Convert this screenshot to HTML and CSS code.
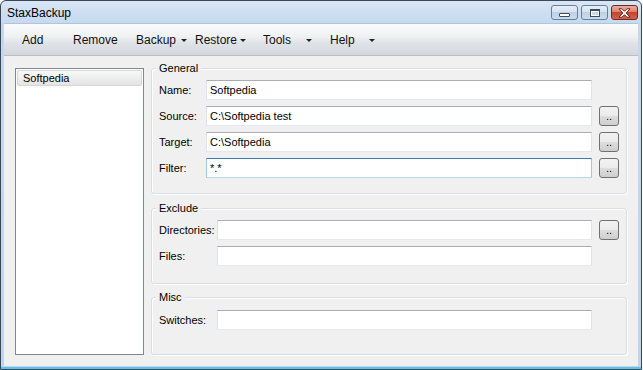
FILE: index.html
```html
<!DOCTYPE html>
<html lang="en">
<head>
    <meta charset="UTF-8">
    <title>StaxBackup</title>
    <link rel="stylesheet" href="styles.css">
</head>
<body>
    <div class="window">
        <!-- Title bar -->
        <div class="titlebar">
            <span class="title">StaxBackup</span>
            <div class="caption-buttons">
                <span class="cap"><span class="glyph-min"></span></span>
                <span class="cap"><span class="glyph-max"></span></span>
                <span class="cap close">
                    <svg width="13" height="10" viewBox="0 0 13 10"><path d="M1 0.8h3l2.5 2.5L9 0.8h3L8.2 5 12 9.2H9L6.5 6.7 4 9.2H1L4.8 5z" fill="#fff" stroke="#5a1c12" stroke-width="0.9" stroke-linejoin="round"/></svg>
                </span>
            </div>
        </div>

        <div class="client">
            <!-- Menu -->
            <div class="menubar">
                <span class="menu-item m-add">Add</span>
                <span class="menu-item m-remove">Remove</span>
                <span class="menu-item m-backup"><span class="menu-text">Backup</span><span class="arrow"></span></span>
                <span class="menu-item m-restore"><span class="menu-text">Restore</span><span class="arrow"></span></span>
                <span class="menu-item m-tools"><span class="menu-text">Tools</span><span class="arrow"></span></span>
                <span class="menu-item m-help"><span class="menu-text">Help</span><span class="arrow"></span></span>
            </div>

            <div class="body">
                <!-- Job list -->
                <div class="list">
                    <div class="list-item">Softpedia</div>
                </div>

                <!-- Settings -->
                <div class="groups">
                    <div class="group general">
                        <div class="group-title">General</div>
                        <div class="fields">
                            <span class="label">Name:</span>
                            <div class="textbox">Softpedia</div>
                            <span></span>

                            <span class="label">Source:</span>
                            <div class="textbox">C:\Softpedia test</div>
                            <button class="browse">..</button>

                            <span class="label">Target:</span>
                            <div class="textbox">C:\Softpedia</div>
                            <button class="browse">..</button>

                            <span class="label">Filter:</span>
                            <div class="textbox focused">*.*</div>
                            <button class="browse">..</button>
                        </div>
                    </div>

                    <div class="group exclude">
                        <div class="group-title">Exclude</div>
                        <div class="fields">
                            <span class="label">Directories:</span>
                            <div class="textbox"></div>
                            <button class="browse">..</button>

                            <span class="label">Files:</span>
                            <div class="textbox"></div>
                            <span></span>
                        </div>
                    </div>

                    <div class="group misc">
                        <div class="group-title">Misc</div>
                        <div class="fields">
                            <span class="label">Switches:</span>
                            <div class="textbox"></div>
                            <span></span>
                        </div>
                    </div>
                </div>
            </div>
        </div>
    </div>
</body>
</html>
```

FILE: styles.css
```css
/* Global */
* {
    box-sizing: border-box;
}

body {
    margin: 0;
    font-family: "Liberation Sans", Arial, sans-serif;
    font-size: 11px;
    color: #000;
    background: #fff;
}

/* Window frame */
.window {
    width: 642px;
    height: 370px;
    border: 1px solid #3b4656;
    border-radius: 6px 6px 0 0;
    padding: 0 3px 3px;
    display: flex;
    flex-direction: column;
    background: linear-gradient(#d8e5f4, #c4d8ee 24px, #c0d5ec);
    box-shadow: inset 0 -2px 0 #5cc3ea;
}

.titlebar {
    height: 22px;
    display: flex;
    align-items: flex-start;
    padding: 3px 0 0 3px;
}

.title {
    font-size: 12px;
    line-height: 18px;
}

.caption-buttons {
    margin-left: auto;
    margin-top: 1px;
    display: flex;
    gap: 3px;
}

.cap {
    width: 27px;
    height: 15px;
    border: 1px solid #6c7d95;
    border-radius: 3px;
    display: flex;
    align-items: center;
    justify-content: center;
    background: linear-gradient(#e7eff8, #d6e2f0 45%, #bfd1e7 50%, #cbdbee);
}

.cap.close {
    border-color: #6e2a1f;
    background: linear-gradient(#eab0a2, #d9806b 45%, #c4442b 50%, #d0634a);
}

.glyph-min {
    width: 11px;
    height: 4px;
    margin-top: 4px;
    border: 1px solid #3b4b60;
    border-radius: 1px;
    background: #fff;
}

.glyph-max {
    width: 10px;
    height: 8px;
    border: 1px solid #3b4b60;
    border-top-width: 2px;
    background: #c9d8ea;
    box-shadow: inset 0 0 0 1px #fff;
}

/* Client area */
.client {
    flex: 1;
    display: flex;
    flex-direction: column;
    background: #f0f0f0;
}

.menubar {
    height: 33px;
    padding-left: 18px;
    display: flex;
    align-items: center;
    font-size: 12px;
    color: #111;
    border-top: 1px solid #b3c4d9;
    border-bottom: 1px solid #b8bfc9;
    background: linear-gradient(#fbfbfc, #eff1f3 40%, #dfe2e7 62%, #d4d8de);
}

.menu-item {
    display: flex;
    align-items: center;
}

.m-add { width: 51px; }
.m-remove { width: 63px; }
.m-backup { width: 59px; }
.m-restore { width: 68px; }
.m-tools { width: 67px; }

.m-backup .menu-text { width: 45px; }
.m-restore .menu-text { width: 45px; }
.m-tools .menu-text { width: 43px; }
.m-help .menu-text { width: 39px; }

.arrow {
    width: 0;
    height: 0;
    margin-top: 2px;
    border-style: solid;
    border-width: 3px 3px 0;
    border-color: #222 transparent transparent;
}

.body {
    flex: 1;
    display: flex;
    gap: 7px;
    padding: 12px 11px 11px;
}

/* Job list */
.list {
    width: 129px;
    padding: 1px;
    border: 1px solid #828790;
    background: #fff;
}

.list-item {
    height: 16px;
    line-height: 14px;
    padding-left: 5px;
    border: 1px solid #d6d6d6;
    border-radius: 2px;
    background: linear-gradient(#f9f9f9, #e4e4e4);
}

/* Group boxes */
.groups {
    flex: 1;
    display: flex;
    flex-direction: column;
}

.group {
    padding: 0 7px 15px;
    border: 1px solid #d5dfe5;
    border-radius: 3px;
    box-shadow: inset 1px 1px 0 #fff, 1px 1px 0 #fff;
}

.group-title {
    width: fit-content;
    margin: -7px 0 5px -3px;
    padding: 0 3px;
    line-height: 13px;
    background: #f0f0f0;
}

.exclude {
    margin-top: 14px;
    padding-bottom: 17px;
}

.misc {
    margin-top: 13px;
    padding-bottom: 24px;
}

.misc .group-title {
    margin-bottom: 6px;
}

.fields {
    display: grid;
    grid-template-columns: 47px 1fr 27px;
    row-gap: 6px;
    align-items: center;
}

.exclude .fields,
.misc .fields {
    grid-template-columns: 58px 1fr 27px;
}

.textbox {
    height: 20px;
    padding: 0 3px;
    line-height: 18px;
    white-space: nowrap;
    border: 1px solid;
    border-color: #abadb3 #e2e3ea #e3e9ef #e2e3ea;
    background: #fff;
}

.textbox.focused {
    border-color: #3d7bad #a4c9e3 #b7d9ed #a4c9e3;
}

.browse {
    width: 20px;
    height: 20px;
    padding: 0;
    justify-self: end;
    font-family: "Liberation Sans", Arial, sans-serif;
    font-size: 11px;
    line-height: 18px;
    color: #000;
    border: 1px solid #707070;
    border-radius: 3px;
    background: linear-gradient(#f2f2f2, #ebebeb 50%, #dddddd 50%, #cfcfcf);
}
```
